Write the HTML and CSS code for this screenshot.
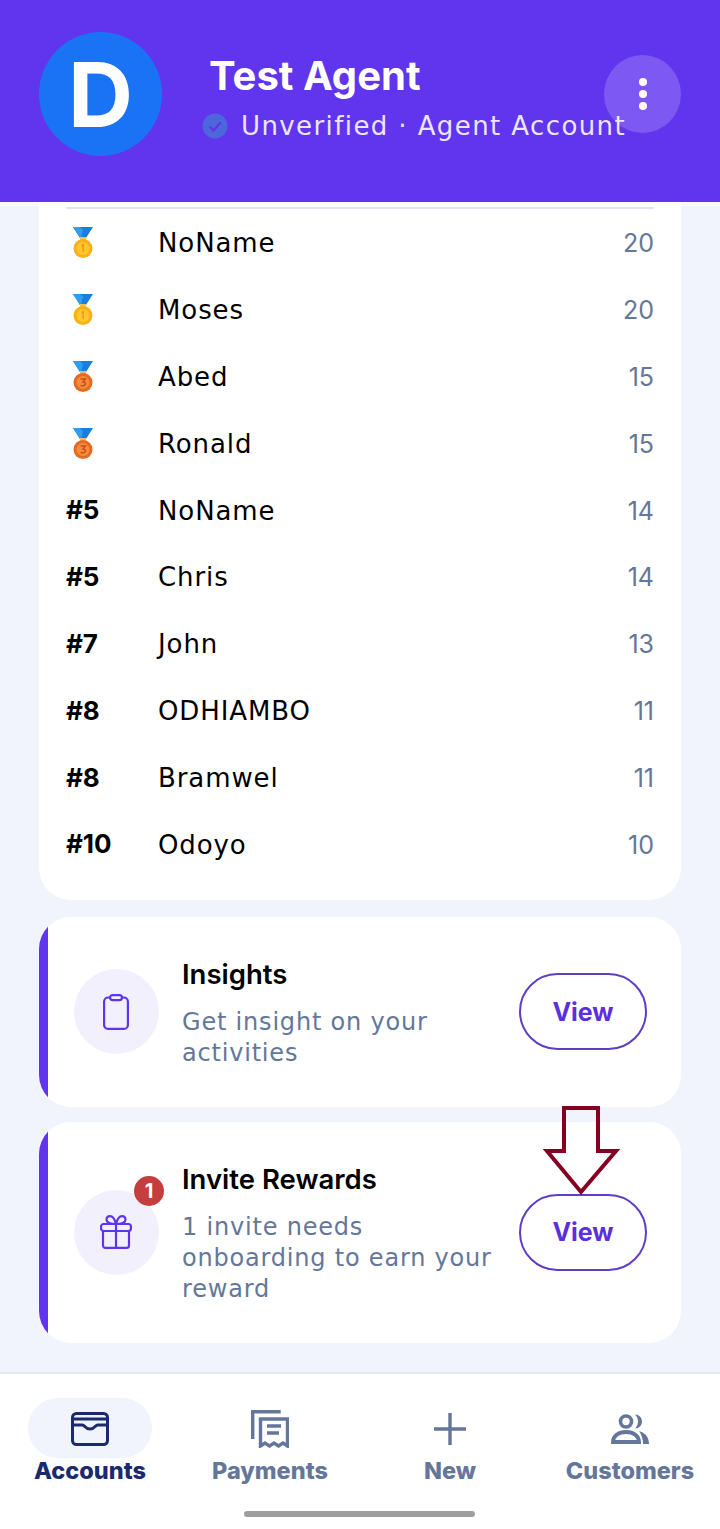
FILE: index.html
```html
<!DOCTYPE html>
<html lang="en">

<head>
    <meta charset="UTF-8">
    <meta name="viewport" content="width=device-width, initial-scale=1.0">
    <title>Agent Account</title>
    <link rel="stylesheet" href="styles.css">
</head>

<body>
    <svg class="defs" width="0" height="0">
        <symbol id="medal-gold" viewBox="0 0 20 32">
            <path d="M0 0h20l-7 11H7z" fill="#1a7fdc" />
            <path d="M0 0h7l3 3-2 8H7z" fill="#2f9df0" />
            <rect x="7" y="10" width="6" height="4" fill="#f3c24d" />
            <circle cx="10" cy="21.500" r="9.500" fill="#fbb018" />
            <circle cx="10" cy="21.500" r="6.500" fill="#ffc62e" />
            <path d="M8.500 19l1.700-1.200v7.200" fill="none" stroke="#f59a1b" stroke-width="1.600" />
        </symbol>
        <symbol id="medal-bronze" viewBox="0 0 20 32">
            <path d="M0 0h20l-7 11H7z" fill="#1a7fdc" />
            <path d="M0 0h7l3 3-2 8H7z" fill="#2f9df0" />
            <rect x="7" y="10" width="6" height="4" fill="#e9b77e" />
            <circle cx="10" cy="21.500" r="9.500" fill="#e66a1e" />
            <circle cx="10" cy="21.500" r="6.500" fill="#f68b40" />
            <path d="M7.500 18h5l-2.500 3c2 0 2.500 1 2.500 1.800 0 1.600-2 2.300-5 1.700" fill="none" stroke="#c9500f" stroke-width="1.400" />
        </symbol>
    </svg>

    <header class="top-bar">
        <div class="avatar">D</div>
        <div class="agent">
            <h1>Test Agent</h1>
            <p class="agent-status">
                <svg class="verified" viewBox="0 0 26 26">
                    <circle cx="13" cy="13" r="12.500" fill="#4d66dc" />
                    <path d="M7.500 13.500l4 4 7-8" fill="none" stroke="#6035e6" stroke-width="2.400" />
                </svg>
                <span>Unverified · Agent Account</span>
            </p>
        </div>
        <a href="#" class="more-btn"><span></span><span></span><span></span></a>
    </header>

    <main>
        <section class="board">
            <div class="row">
                <div class="rank"><svg class="medal"><use href="#medal-gold" /></svg></div>
                <div class="name">NoName</div>
                <div class="score">20</div>
            </div>
            <div class="row">
                <div class="rank"><svg class="medal"><use href="#medal-gold" /></svg></div>
                <div class="name">Moses</div>
                <div class="score">20</div>
            </div>
            <div class="row">
                <div class="rank"><svg class="medal"><use href="#medal-bronze" /></svg></div>
                <div class="name">Abed</div>
                <div class="score">15</div>
            </div>
            <div class="row">
                <div class="rank"><svg class="medal"><use href="#medal-bronze" /></svg></div>
                <div class="name">Ronald</div>
                <div class="score">15</div>
            </div>
            <div class="row">
                <div class="rank">#5</div>
                <div class="name">NoName</div>
                <div class="score">14</div>
            </div>
            <div class="row">
                <div class="rank">#5</div>
                <div class="name">Chris</div>
                <div class="score">14</div>
            </div>
            <div class="row">
                <div class="rank">#7</div>
                <div class="name">John</div>
                <div class="score">13</div>
            </div>
            <div class="row">
                <div class="rank">#8</div>
                <div class="name">ODHIAMBO</div>
                <div class="score">11</div>
            </div>
            <div class="row">
                <div class="rank">#8</div>
                <div class="name">Bramwel</div>
                <div class="score">11</div>
            </div>
            <div class="row">
                <div class="rank">#10</div>
                <div class="name">Odoyo</div>
                <div class="score">10</div>
            </div>
        </section>

        <section class="promo promo-insights">
            <div class="promo-icon">
                <svg viewBox="0 0 26 36" width="26" height="36" fill="none" stroke="#5f35ec" stroke-width="2.200">
                    <rect x="1.100" y="3.500" width="23.800" height="31.400" rx="4" />
                    <rect x="7" y="1.100" width="12" height="5" rx="2.500" fill="#f3f0fd" />
                </svg>
            </div>
            <div class="promo-text">
                <h2>Insights</h2>
                <p>Get insight on your activities</p>
            </div>
            <a href="#" class="view-btn">View</a>
        </section>

        <section class="promo promo-invite">
            <div class="promo-icon">
                <svg viewBox="0 0 32 34" width="32" height="34" fill="none" stroke="#5f35ec" stroke-width="2.200" stroke-linejoin="round">
                    <rect x="1.100" y="9" width="29.800" height="7" rx="2.500" />
                    <path d="M3 16v14.500a2.400 2.400 0 0 0 2.400 2.400h21.200a2.400 2.400 0 0 0 2.400-2.400V16" />
                    <path d="M16 9v24" />
                    <path d="M16 9c-1-4-3-7.900-6-7.900-2.500 0-3.500 1.900-3.500 3.700C6.500 7.500 9 9 16 9c7 0 9.500-1.500 9.500-4.200 0-1.800-1-3.700-3.500-3.700-3 0-5 3.900-6 7.900z" />
                </svg>
                <span class="badge">1</span>
            </div>
            <div class="promo-text">
                <h2>Invite Rewards</h2>
                <p>1 invite needs onboarding to earn your reward</p>
            </div>
            <a href="#" class="view-btn">View</a>
        </section>

        <svg class="arrow" viewBox="0 0 80 93" width="80" height="93">
            <path d="M23 4h34v43h18L40 88 6 47h17z" fill="none" stroke="#850020" stroke-width="4" />
        </svg>
    </main>

    <nav class="tabs">
        <a href="#" class="tab active">
            <div class="tab-icon">
                <svg viewBox="0 0 38 34" width="38" height="34" fill="none" stroke="#1a2a6c" stroke-width="3" stroke-linejoin="round">
                    <rect x="1.500" y="1.500" width="35" height="31" rx="4" />
                    <path d="M1.500 7h35" />
                    <path d="M1.500 13h10c2 0 2.500 4 7.500 4s5.500-4 7.500-4h10" />
                </svg>
            </div>
            <span>Accounts</span>
        </a>
        <a href="#" class="tab">
            <div class="tab-icon">
                <svg viewBox="0 0 38 38" width="38" height="38" fill="none" stroke="#64779a" stroke-width="3.400">
                    <path d="M1.700 29V1.700h28" />
                    <path d="M9.500 36V9h27v27l-4.500-3-4.500 3-4.500-3-4.500 3-4.500-3z" />
                    <path d="M16 16h14M16 23h12" />
                </svg>
            </div>
            <span>Payments</span>
        </a>
        <a href="#" class="tab">
            <div class="tab-icon">
                <svg viewBox="0 0 32 32" width="32" height="32" stroke="#64779a" stroke-width="3.400">
                    <path d="M16 0v32M0 16h32" />
                </svg>
            </div>
            <span>New</span>
        </a>
        <a href="#" class="tab">
            <div class="tab-icon">
                <svg viewBox="0 0 38 30" width="38" height="30">
                    <circle cx="15" cy="7.500" r="5.500" fill="none" stroke="#64779a" stroke-width="3.600" />
                    <path d="M24 0.500c4 0 7 3 7 7s-3 7-7 7c2-2 3-4.500 3-7s-1-5-3-7z" fill="#64779a" />
                    <path d="M2 28c0-6 5.500-10 13-10s13 4 13 10z" fill="none" stroke="#64779a" stroke-width="4" />
                    <path d="M28 17c5 1.500 10 5 10 13h-6c0-5-1.500-9.500-4-13z" fill="#64779a" />
                </svg>
            </div>
            <span>Customers</span>
        </a>
    </nav>
    <div class="home-bar"></div>
</body>

</html>
```

FILE: styles.css
```css
* {
    padding: 0;
    margin: 0;
    box-sizing: border-box;
}

a {
    text-decoration: none;
}

body {
    position: relative;
    height: 1529px;
    overflow: hidden;
    background-color: #f1f4fd;
    font-family: "DejaVu Sans", sans-serif;
}

.defs {
    display: block;
    height: 0;
}

.top-bar {
    height: 202px;
    background-color: #6134ee;
    box-shadow: 0 4px 0 #f9faff;
    display: flex;
    align-items: flex-start;
    padding: 32px 39px 0;
    color: white;
}

.avatar {
    width: 123px;
    height: 124px;
    flex: none;
    border-radius: 50%;
    background-color: #1a73f5;
    display: flex;
    align-items: center;
    justify-content: center;
    font-family: Inter, sans-serif;
    font-size: 90px;
    font-weight: 700;
}

.agent {
    position: relative;
    z-index: 1;
    margin-left: 40px;
    width: 395px;
    flex: none;
    margin-right: -53px;
}

.agent h1 {
    margin: 20px 0 0 7px;
    font-family: Inter, sans-serif;
    font-size: 40px;
    line-height: 48px;
    font-weight: 700;
}

.agent-status {
    display: flex;
    align-items: center;
    gap: 13px;
    margin-top: 11px;
    font-size: 26px;
    letter-spacing: 1.400px;
    white-space: nowrap;
    color: #ece6fd;
}

.verified {
    width: 26px;
    height: 26px;
    flex: none;
}

.more-btn {
    width: 77px;
    height: 78px;
    margin: 23px 0 0 auto;
    flex: none;
    border-radius: 50%;
    background-color: #7e58f3;
    display: flex;
    flex-direction: column;
    align-items: center;
    justify-content: center;
    gap: 4px;
}

.more-btn span {
    width: 8px;
    height: 8px;
    border-radius: 50%;
    background-color: white;
}

main {
    padding: 0 39px;
}

.board {
    background-color: white;
    border-radius: 0 0 32px 32px;
    padding: 5px 27px 22px;
}

.row {
    height: 66.900px;
    padding-top: 1px;
    display: flex;
    align-items: center;
    font-size: 26px;
    letter-spacing: 0.900px;
    color: black;
}

.row:first-child {
    border-top: 2px solid #e4e4ef;
    height: 68.900px;
}

.rank {
    width: 92px;
    flex: none;
    padding-bottom: 2px;
    font-family: Inter, sans-serif;
    font-weight: 700;
    font-size: 26px;
    letter-spacing: 0;
}

.medal {
    display: block;
    width: 26px;
    height: 32px;
    margin: 2px 0 0 4px;
}

.name {
    flex: 1;
}

.score {
    font-family: Inter, sans-serif;
    font-size: 25px;
    letter-spacing: 0;
    color: #64779a;
}

.promo {
    position: relative;
    overflow: hidden;
    background-color: white;
    border-radius: 32px;
    display: flex;
    align-items: center;
    padding-left: 35px;
}

.promo::before {
    content: "";
    position: absolute;
    left: 0;
    top: 0;
    bottom: 0;
    width: 9px;
    background-color: #6134ee;
}

.promo-insights {
    height: 190px;
    margin-top: 17px;
}

.promo-invite {
    height: 221px;
    margin-top: 15px;
}

.promo-icon {
    position: relative;
    width: 85px;
    height: 85px;
    flex: none;
    border-radius: 50%;
    background-color: #f3f0fd;
    display: flex;
    align-items: center;
    justify-content: center;
}

.promo-icon svg {
    margin-right: 2px;
}

.badge {
    position: absolute;
    top: -14px;
    right: -5px;
    width: 30px;
    height: 30px;
    border-radius: 50%;
    background-color: #c53d3d;
    color: white;
    font-family: Inter, sans-serif;
    font-size: 20px;
    font-weight: 700;
    display: flex;
    align-items: center;
    justify-content: center;
}

.promo-text {
    width: 318px;
    flex: none;
    margin-left: 23px;
    padding-top: 3px;
}

.promo-text h2 {
    font-family: Inter, sans-serif;
    font-size: 27.500px;
    line-height: 32px;
    font-weight: 600;
    color: black;
}

.promo-text p {
    margin-top: 17px;
    font-size: 24px;
    letter-spacing: 0.800px;
    line-height: 30.700px;
    color: #64779a;
}

.view-btn {
    width: 128px;
    height: 77px;
    flex: none;
    margin-left: 19px;
    border: 2px solid #5f3dc4;
    border-radius: 39px;
    background-color: white;
    display: flex;
    align-items: center;
    justify-content: center;
    font-family: Inter, sans-serif;
    font-size: 25px;
    font-weight: 700;
    color: #5b2fdd;
}

.arrow {
    position: absolute;
    left: 541px;
    top: 1104px;
}

.tabs {
    position: absolute;
    left: 0;
    right: 0;
    top: 1372px;
    bottom: 0;
    background-color: white;
    border-top: 2px solid #e8e9f0;
    display: grid;
    grid-template-columns: repeat(4, 180px);
    padding-top: 24px;
}

.tab {
    display: flex;
    flex-direction: column;
    align-items: center;
    font-family: Inter, sans-serif;
    font-size: 23.500px;
    font-weight: 800;
    color: #64779a;
}

.tab-icon {
    width: 124px;
    height: 60px;
    padding-top: 2px;
    border-radius: 30px;
    display: flex;
    align-items: center;
    justify-content: center;
}

.tab span {
    line-height: 26px;
}

.tab.active {
    color: #1a2a6c;
}

.tab.active .tab-icon {
    background-color: #f1f4fd;
}

.home-bar {
    position: absolute;
    left: 244px;
    top: 1511px;
    width: 231px;
    height: 6px;
    border-radius: 3px;
    background-color: #9e9e9e;
}
```
